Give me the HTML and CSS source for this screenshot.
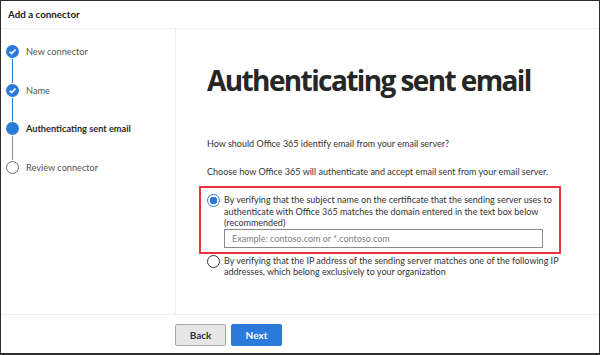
FILE: index.html
```html
<!DOCTYPE html>
<html lang="en">
<head>
<meta charset="UTF-8" />
<title>Add a connector</title>
<link rel="stylesheet" href="styles.css">
</head>
<body>
<div class="frame">
  <header class="top">Add a connector</header>

  <div class="main">
    <ul class="steps">
      <li class="step done">
        <div class="track"><span class="dot"><svg viewBox="0 0 12 12"><path d="M3.3 6.2 L5.2 8 L8.8 4.2" /></svg></span><span class="line"></span></div>
        <span class="label">New connector</span>
      </li>
      <li class="step done">
        <div class="track"><span class="dot"><svg viewBox="0 0 12 12"><path d="M3.3 6.2 L5.2 8 L8.8 4.2" /></svg></span><span class="line"></span></div>
        <span class="label">Name</span>
      </li>
      <li class="step current">
        <div class="track"><span class="dot"></span><span class="line"></span></div>
        <span class="label">Authenticating sent email</span>
      </li>
      <li class="step todo">
        <div class="track"><span class="dot"></span></div>
        <span class="label">Review connector</span>
      </li>
    </ul>

    <div class="content">
      <h1>Authenticating sent email</h1>
      <p class="q">How should Office 365 identify email from your email server?</p>
      <p class="q">Choose how Office 365 will authenticate and accept email sent from your email server.</p>

      <div class="highlight">
        <label class="option">
          <span class="radio checked"></span>
          <span class="opt-text">By verifying that the subject name on the certificate that the sending server uses to authenticate with Office 365 matches the domain entered in the text box below (recommended)</span>
        </label>
        <input class="domain" type="text" placeholder="Example: contoso.com or *.contoso.com" />
      </div>

      <label class="option second">
        <span class="radio"></span>
        <span class="opt-text">By verifying that the IP address of the sending server matches one of the following IP addresses, which belong exclusively to your organization</span>
      </label>
    </div>
  </div>

  <footer class="bottom">
    <button class="btn back">Back</button>
    <button class="btn next">Next</button>
  </footer>
</div>
</body>
</html>
```

FILE: styles.css
```css
* {
  margin: 0; padding: 0; box-sizing: border-box;
  font-family: Lato, 'Open Sans', sans-serif;
}
body {
  background: #fff;
  color: #333;
}
.frame {
  width: 600px;
  height: 355px;
  border: 1px solid #2e2e2e;
  border-bottom-width: 2px;
  display: flex;
  flex-direction: column;
  overflow: hidden;
}
.top {
  height: 28px;
  flex: none;
  border-bottom: 1px solid #efefef;
  padding-left: 7px;
  font-size: 9.8px;
  font-weight: 700;
  color: #1a1a1a;
  line-height: 26px;
}
.main {
  flex: 1;
  display: flex;
  min-height: 0;
}
.steps {
  list-style: none;
  width: 175px;
  flex: none;
  border-right: 1px solid #efefef;
  padding: 16px 0 0 5px;
}
.step {
  display: flex;
  height: 38.5px;
  gap: 7px;
}
.track {
  width: 13px;
  display: flex;
  flex-direction: column;
  align-items: center;
}
.dot {
  width: 13px;
  height: 13px;
  border-radius: 50%;
  flex: none;
  display: flex;
}
.dot svg {
  width: 13px;
  height: 13px;
}
.dot path {
  fill: none;
  stroke: #fff;
  stroke-width: 1.5;
}
.line {
  width: 1px;
  flex: 1;
  margin: 1px 0;
  background: #2b79d8;
}
.done .dot, .current .dot {
  background: #2b79d8;
}
.current .line {
  background: #8a8a8a;
}
.todo .dot {
  border: 1px solid #6e6e6e;
  background: #fff;
}
.label {
  font-size: 9.2px;
  line-height: 13px;
  color: #555;
}
.current .label {
  font-weight: 700;
  color: #2a2a2a;
}
.content {
  flex: 1;
  padding: 31px 0 0 31px;
}
h1 {
  font-family: 'Open Sans', sans-serif;
  font-size: 28px;
  font-weight: 700;
  color: #262626;
  line-height: 40px;
  letter-spacing: -1.6px;
  margin-bottom: 38px;
}
.q {
  font-size: 9px;
  line-height: 12px;
  color: #333;
  margin-bottom: 16px;
}
.q + .q {
  margin-bottom: 8px;
}
.highlight {
  width: 362px;
  margin: 0 0 0 -8px;
  border: 2px solid #e8323c;
  padding: 6px 5px 4px 6px;
}
.option {
  display: flex;
  gap: 4px;
  align-items: flex-start;
}
.radio {
  width: 13px;
  height: 13px;
  flex: none;
  border-radius: 50%;
  border: 1px solid #333;
  background: #fff;
  margin-top: 0;
}
.radio.checked {
  border-color: #2b79d8;
  background: radial-gradient(circle, #2b79d8 0 3.5px, #fff 4px);
}
.opt-text {
  font-size: 9px;
  line-height: 11.5px;
  color: #333;
}
.domain {
  display: block;
  width: 319px;
  height: 19px;
  margin: 0 0 0 17px;
  border: 1px solid #8a8a8a;
  padding: 0 7px;
  font-size: 9px;
  color: #333;
}
.domain::placeholder {
  color: #808080;
}
.second {
  margin-top: 1px;
}
.bottom {
  height: 39px;
  flex: none;
  border-top: 1px solid #efefef;
  padding: 9px 0 0 174px;
  display: flex;
  gap: 5px;
  align-items: flex-start;
}
.btn {
  width: 51px;
  height: 22px;
  border-radius: 2px;
  font-size: 10px;
  font-weight: 700;
  cursor: pointer;
}
.back {
  background: #e6e6e6;
  border: 1px solid #a8a8a8;
  color: #333;
}
.next {
  background: #2b79d8;
  border: 1px solid #2b79d8;
  color: #fff;
}
```
